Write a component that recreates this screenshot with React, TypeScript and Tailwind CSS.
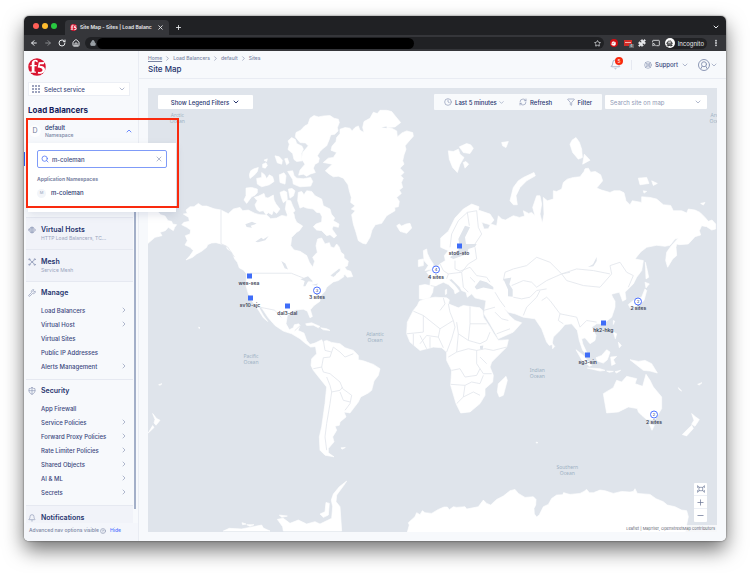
import React from 'react';
import {
  ArrowLeft,
  ArrowRight,
  Bell,
  Cast,
  ChevronDown,
  ChevronRight,
  ChevronUp,
  CircleHelp,
  Clock,
  Funnel,
  Hand,
  HatGlasses,
  House,
  LifeBuoy,
  Lock,
  Minus,
  MoreVertical,
  Plus,
  Puzzle,
  RefreshCw,
  RotateCw,
  Search,
  Star,
  Wrench,
  X,
} from 'lucide-react';

interface NavItem {
  label: string;
  expandable?: boolean;
}

interface Pin {
  label: string;
  x: number;
  y: number;
  count?: number;
}

const MAP_W = 1707;
const MAP_H = 1335;

const manageItems: NavItem[] = [
  { label: 'Load Balancers', expandable: true },
  { label: 'Virtual Host', expandable: true },
  { label: 'Virtual Sites' },
  { label: 'Public IP Addresses' },
  { label: 'Alerts Management', expandable: true },
];

const securityItems: NavItem[] = [
  { label: 'App Firewall' },
  { label: 'Service Policies', expandable: true },
  { label: 'Forward Proxy Policies', expandable: true },
  { label: 'Rate Limiter Policies', expandable: true },
  { label: 'Shared Objects', expandable: true },
  { label: 'AI & ML', expandable: true },
  { label: 'Secrets', expandable: true },
];

const pins: Pin[] = [
  { label: 'wes-sea', x: 303, y: 566 },
  { label: 'sv10-sjc', x: 306, y: 630 },
  { label: 'dal3-dal', x: 418, y: 654 },
  { label: '3 sites', x: 507, y: 608, count: 3 },
  { label: '4 sites', x: 864, y: 546, count: 4 },
  { label: 'sto6-sto', x: 933, y: 476 },
  { label: 'hk2-hkg', x: 1366, y: 707 },
  { label: 'sg3-sin', x: 1319, y: 804 },
  { label: '2 sites', x: 1471, y: 641, count: 2 },
  { label: '2 sites', x: 1518, y: 983, count: 2 },
];

const oceans = [
  { name: 'Arctic', x: 88, y: 90 },
  { name: 'Arctic', x: 1707, y: 90 },
  { name: 'Pacific', x: 309, y: 814 },
  { name: 'Atlantic', x: 681, y: 750 },
  { name: 'Indian', x: 1168, y: 856 },
  { name: 'Southern', x: 1258, y: 1150 },
];

const F5Logo = ({ className }: { className: string }) => (
  <svg viewBox="0 0 36 36" className={className} aria-label="F5">
    <circle cx="18" cy="18" r="17.5" fill="#d9132f" />
    <path d="M3 29.500h13v-2l-3-.7V16.500h4.500V14H13V9.500c0-3 1.600-3.700 3.600-1.800l1.800 1.300 1.600-3C16 1.500 7.500 3.500 7.500 10.500V14l-4 1v1.500h4v10.300L3 27.500z" fill="#fff" />
    <path d="M21.500 8.500 33 8l-1.500 4.500h-7.500l-.7 3.200c7 .3 10.700 2.800 10.700 7.300 0 6-6 9.800-14.500 8.200l.8-3.700c5 1 8.700-.2 8.700-3.500 0-3.200-3.600-4.700-9.500-5z" fill="#fff" />
  </svg>
);

const LineIcon = ({ className = 'size-2', children }: { className?: string; children: React.ReactNode }) => (
  <svg viewBox="0 0 24 24" fill="none" stroke="currentColor" strokeWidth="2" strokeLinecap="round" strokeLinejoin="round" className={className}>
    {children}
  </svg>
);

const HostsIcon = () => (
  <LineIcon>
    <path d="M6 6a8 8 0 0 1 12 0M6 18a8 8 0 0 0 12 0M12 3v6M12 15v6M9 5v4M15 5v4M9 15v4M15 15v4" />
    <rect x="2" y="9.500" width="20" height="5" rx="1.500" />
  </LineIcon>
);

const MeshIcon = () => (
  <LineIcon>
    <circle cx="4" cy="4" r="2" />
    <circle cx="20" cy="4" r="2" />
    <circle cx="4" cy="20" r="2" />
    <circle cx="20" cy="20" r="2" />
    <circle cx="12" cy="12" r="2.500" />
    <path d="m6 6 4 4M18 6l-4 4M6 18l4-4M18 18l-4-4" />
  </LineIcon>
);

const ShieldIcon = () => (
  <LineIcon>
    <path d="M12 2c3 2 6 3 9 3v6c0 5-4 9-9 11-5-2-9-6-9-11V5c3 0 6-1 9-3zM12 2v20M3 11h18" />
  </LineIcon>
);

const GridIcon = () => (
  <svg viewBox="0 0 24 24" fill="currentColor" className="mr-[4px] size-2">
    <path d="M1 1h4v4H1zM10 1h4v4h-4zM19 1h4v4h-4zM1 10h4v4H1zM10 10h4v4h-4zM19 10h4v4h-4zM1 19h4v4H1zM10 19h4v4h-4zM19 19h4v4h-4z" />
  </svg>
);

const BrowserChrome = () => (
  <header className="shrink-0 bg-[#202124] text-[#e8eaed]">
    <div className="flex h-[19px] items-end">
      <div className="flex h-full w-[41px] items-center gap-[3px] pl-[9px]">
        <span className="size-[6px] rounded-full bg-[#ff5f57]" />
        <span className="size-[6px] rounded-full bg-[#febc2e]" />
        <span className="size-[6px] rounded-full bg-[#28c840]" />
      </div>
      <div className="flex h-[15px] w-[104px] items-center rounded-t bg-[#35363a] px-[5px]">
        <F5Logo className="size-[7px] shrink-0" />
        <span className="ml-[3px] flex-1 whitespace-nowrap text-[5px] font-semibold">
          Site Map - Sites | Load Balanc
        </span>
        <button aria-label="Close tab"><X className="size-[7px]" strokeWidth={3} /></button>
      </div>
      <button aria-label="New tab" className="mb-1 ml-[6px]"><Plus className="size-[7px]" strokeWidth={3} /></button>
      <button aria-label="Tab list" className="mb-1 mr-[6px] ml-auto"><ChevronDown className="size-2" strokeWidth={3} /></button>
    </div>
    <div className="flex h-4 items-center bg-[#35363a] pr-[6px] pl-[6px]">
      <button aria-label="Back"><ArrowLeft className="size-2" strokeWidth={3} /></button>
      <button aria-label="Forward" className="ml-[6px] text-[#85878a]"><ArrowRight className="size-2" strokeWidth={3} /></button>
      <button aria-label="Reload" className="ml-[6px]"><RotateCw className="size-2" strokeWidth={3} /></button>
      <button aria-label="Home" className="ml-[6px]"><House className="size-2" strokeWidth={3} /></button>
      <div className="ml-[5px] flex h-[12px] flex-1 items-center rounded-full bg-[#202124] pr-[3px] pl-[5px]">
        <Lock className="size-[6px] fill-current text-[#9aa0a6]" strokeWidth={3} />
        <div className="ml-[1px] h-[11px] w-[62%] rounded-full bg-black" />
        <button aria-label="Bookmark" className="ml-auto"><Star className="size-[7px]" strokeWidth={2.5} /></button>
      </div>
      <span className="ml-[6px] flex size-2 items-center justify-center rounded-full bg-[#d40d12]">
        <Hand className="size-[5px] fill-white text-white" />
      </span>
      <span className="relative ml-[6px] h-[6px] w-2 bg-[#d32d27]">
        <span className="absolute top-[2px] left-[1px] h-px w-[6px] bg-[#f3b3b0]" />
        <span className="absolute -right-[2px] -bottom-[2px] bg-[#5f6368] px-px text-[4px] leading-[4px]">4</span>
      </span>
      <Puzzle className="ml-[6px] size-2 fill-current" />
      <Cast className="ml-[6px] size-2" strokeWidth={2.5} />
      <span className="ml-[5px] flex h-[11px] items-center rounded-full bg-[#202124] pr-[3px]">
        <span className="flex size-[10px] items-center justify-center rounded-full bg-white text-[#202124]">
          <HatGlasses className="size-[7px]" strokeWidth={3} />
        </span>
        <span className="ml-[3px] text-[6px]">Incognito</span>
      </span>
      <button aria-label="More" className="ml-[5px]"><MoreVertical className="size-2" strokeWidth={3.5} /></button>
    </div>
  </header>
);

const NavGroup = ({
  icon,
  title,
  subtitle,
}: {
  icon: React.ReactNode;
  title: string;
  subtitle: string;
}) => (
  <a href="#" className="flex h-8 items-start border-t border-[#e6e9f1] bg-[#f1f3f9] pt-[7px] pl-[2px]">
    <span className="mt-px w-[13px] text-[#8c97b5]">{icon}</span>
    <span>
      <span className="block text-[7px] leading-[9px] font-semibold text-[#26346e]">{title}</span>
      <span className="block text-[5px] leading-[8px] text-[#9ba5be]">{subtitle}</span>
    </span>
  </a>
);

const NavSection = ({
  icon,
  title,
  items,
}: {
  icon: React.ReactNode;
  title: string;
  items: NavItem[];
}) => (
  <section className="border-t border-[#e6e9f1] pt-[6px] pb-[6px] pl-[2px]">
    <div className="mb-[5px] flex items-center">
      <span className="w-[13px] text-[#8c97b5]">{icon}</span>
      <h3 className="text-[7px] leading-[10px] font-semibold text-[#26346e]">{title}</h3>
    </div>
    <ul>
      {items.map((item) => (
        <li key={item.label}>
          <a href="#" className="flex h-[14px] items-center justify-between pr-[5px] pl-[13px] text-[6px] font-medium text-[#3a477c]">
            {item.label}
            {item.expandable && <ChevronRight className="size-2 text-[#8c97b5]" />}
          </a>
        </li>
      ))}
    </ul>
  </section>
);

const NamespacePicker = () => (
  <div className="relative z-20 mt-[3px] h-6">
    <button className="flex h-full w-full items-center pr-[5px] pl-[5px] text-left">
      <span className="flex size-3 items-center justify-center rounded-full bg-white/70 text-[7px] text-[#6d7897]">D</span>
      <span className="ml-[4px] flex-1">
        <span className="block text-[6px] leading-[9px] font-medium text-[#26346e]">default</span>
        <span className="block text-[5px] leading-[7px] font-medium text-[#7a84a3]">Namespace</span>
      </span>
      <ChevronUp className="size-2 text-[#4f73ff]" strokeWidth={2.5} />
    </button>
    <div className="absolute top-full left-[4px] h-[69px] w-[148px] bg-white px-[9px] pt-[7px] shadow-[0_3px_8px_rgba(40,60,110,0.12)]">
      <label className="flex h-[18px] items-center rounded-[2px] border border-[#7f9bf8] bg-white px-[3px]">
        <Search className="size-2 text-[#5a7cf5]" strokeWidth={2.5} />
        <input
          aria-label="Search namespaces"
          defaultValue="m-coleman"
          className="ml-[3px] w-0 flex-1 bg-transparent text-[6px] font-medium text-[#3a477c] outline-none"
        />
        <button aria-label="Clear"><X className="size-2 text-[#8c97b5]" /></button>
      </label>
      <p className="mt-[7px] text-[5px] leading-[8px] font-bold text-[#7a84a3]">Application Namespaces</p>
      <button className="mt-[5px] flex items-center text-[6px] leading-[10px] font-medium text-[#26346e]">
        <span className="mr-[5px] flex size-[9px] items-center justify-center rounded-full bg-[#f3f5f9] text-[4px] text-[#a9b2c8]">M</span>
        m-coleman
      </button>
    </div>
    <div className="pointer-events-none absolute -top-[1px] left-[2px] h-[90px] w-[153px] border-2 border-[#f92a0e]" />
  </div>
);

const Sidebar = () => (
  <aside className="relative flex w-[115px] shrink-0 flex-col border-r border-[#e9ecf3] bg-[#f7f9fc]">
    <span className="absolute top-[101px] left-0 h-[14px] w-px bg-[#2f5bea]" />
    <div className="px-1 pt-[7px]">
      <F5Logo className="size-[18px]" />
      <button className="mt-[6px] flex h-[14px] w-[102px] items-center border border-[#eceff5] bg-white px-[3px] text-[6px] font-medium text-[#3a477c]">
        <GridIcon />
        Select service
        <ChevronDown className="ml-auto size-2 text-[#8c97b5]" />
      </button>
      <h2 className="mt-2 text-[8px] leading-[12px] font-bold text-[#16225c]">Load Balancers</h2>
    </div>
    <NamespacePicker />
    <div className="relative min-h-0 flex-1 overflow-hidden pt-[74px]">
      <nav className="mr-[5px] ml-[2px]">
        <NavGroup icon={<HostsIcon />} title="Virtual Hosts" subtitle="HTTP Load Balancers, TC..." />
        <NavGroup icon={<MeshIcon />} title="Mesh" subtitle="Service Mesh" />
        <NavSection icon={<Wrench className="size-2" />} title="Manage" items={manageItems} />
        <NavSection icon={<ShieldIcon />} title="Security" items={securityItems} />
        <NavGroup icon={<Bell className="size-2" />} title="Notifications" subtitle="" />
      </nav>
      <span className="absolute top-0 right-[2px] bottom-[14px] w-[2px] bg-[#a3afc8]" />
    </div>
    <footer className="flex h-[18px] items-center bg-[#f4f6fb] pb-[3px] pl-[5px] text-[5px] font-medium text-[#7a84a3]">
      Advanced nav options visible
      <CircleHelp className="ml-[1px] size-[6px]" />
      <button className="ml-[4px] text-[#4f73ff]">Hide</button>
    </footer>
  </aside>
);

const PageHeader = () => (
  <div className="flex h-7 shrink-0 items-center border-b border-[#e9ecf3] pr-[8px] pl-[9px]">
    <div>
      <nav className="flex items-center gap-[2px] text-[5px] leading-[8px] font-medium text-[#7a84a3]">
        <a href="#" className="underline">Home</a>
        <ChevronRight className="size-[7px]" />
        <a href="#">Load Balancers</a>
        <ChevronRight className="size-[7px]" />
        <a href="#">default</a>
        <ChevronRight className="size-[7px]" />
        <a href="#">Sites</a>
      </nav>
      <h1 className="mt-px text-[8px] leading-[12px] font-medium text-[#26346e]">Site Map</h1>
    </div>
    <button aria-label="Alerts" className="relative ml-auto text-[#8c97b5]">
      <Bell className="size-[11px]" strokeWidth={1.5} />
      <span className="absolute -top-[2px] -right-[2px] flex size-2 items-center justify-center rounded-full bg-[#f92a0e] text-[5px] leading-none text-white">5</span>
    </button>
    <span className="ml-[10px] h-[10px] w-px bg-[#e6e9f1]" />
    <button className="ml-3 flex items-center text-[6px] font-medium text-[#3a477c]">
      <LifeBuoy className="mr-[3px] size-2 text-[#8c97b5]" />
      Support
      <ChevronDown className="ml-[3px] size-2 text-[#8c97b5]" />
    </button>
    <button aria-label="Account" className="ml-[9px] flex items-center text-[#8c97b5]">
      <LineIcon className="size-3">
        <circle cx="12" cy="12" r="11" />
        <circle cx="12" cy="10.500" r="5" />
        <path d="m8 15-2 4M16 15l2 4" />
      </LineIcon>
      <ChevronDown className="size-2" />
    </button>
  </div>
);

const WorldMap = () => (
  <svg viewBox={`0 0 ${MAP_W} ${MAP_H}`} preserveAspectRatio="none" className="absolute inset-0 h-full w-full">
    <g fill="#fff" stroke="#fff" strokeWidth="2" strokeLinejoin="round">
      {/* North America and Greenland */}
      <g transform="translate(-24 -21)">
        <path d="M24 386 50 390 62 402 75 406 84 420 95 422 98 430 110 432 104 440 100 450 85 440 76 450 60 455 66 465 45 470 24 488z" />
        <path d="M130 400 142 398 138 388 150 378 162 378 175 368 186 376 200 376 222 384 243 388 265 399 280 385 300 380 308 390 325 388 345 398 360 402 380 403 392 414 410 412 425 404 440 407 450 388 462 400 464 412 470 425 488 436 478 450 470 455 455 470 452 495 462 508 480 512 500 525 508 545 518 560 524 542 518 530 532 515 528 495 533 475 545 472 555 490 568 486 572 498 582 502 590 490 597 498 603 515 612 522 612 532 625 542 622 556 595 565 570 585 580 590 600 575 612 588 595 600 580 604 570 612 560 620 555 632 540 648 540 662 522 675 511 688 517 708 510 712 502 692 490 686 470 688 455 692 442 705 438 730 448 748 460 742 463 733 476 730 480 735 474 750 492 758 500 780 510 792 525 788 530 798 512 800 495 788 480 775 455 760 430 752 405 735 385 712 365 682 355 678 370 705 383 723 370 712 350 680 335 660 325 640 318 615 320 580 310 568 298 562 292 545 284 535 276 515 262 505 258 494 243 490 228 486 215 487 203 492 200 500 185 512 170 520 158 530 138 538 150 525 160 510 150 500 135 493 142 480 136 465 150 460 152 448 140 440 125 432 132 425 148 422 146 410z" />
        <path d="M588 582 600 572 602 562 612 556 620 568 632 572 638 588 622 590 615 582 605 588z" />
        <path d="M475 335 485 332 492 342 500 330 515 332 525 345 545 355 550 375 570 385 574 400 584 412 580 420 597 430 595 440 580 436 576 445 590 465 582 472 570 462 560 465 545 450 530 448 520 438 528 430 545 424 546 408 540 396 530 395 520 385 500 382 490 378 480 382 473 360z" />
        <path d="M345 372 352 360 343 350 356 346 372 338 376 350 384 352 400 343 402 358 408 370 420 385 410 398 400 390 396 402 385 396 378 402 370 390 358 392 350 386z" />
        <path d="M318 322 335 320 352 325 352 336 344 344 335 348 320 368 312 358 318 345zM328 282 332 270 342 264 355 260 352 272 344 282 330 293zM350 293 365 290 365 275 374 282 380 294 388 282 398 288 402 302 388 312 365 318 352 310z" />
        <path d="M372 238 382 234 380 242zM368 250 378 246 382 254 376 262 368 260zM405 225 418 228 427 238 425 250 412 246zM434 234 442 232 447 246 440 252zM418 282 432 276 438 285 435 310 420 305zM443 272 458 270 462 284 470 292 490 294 512 290 518 302 512 316 480 318 460 310 458 296zM420 335 432 330 440 334 442 356 430 366 424 350zM445 325 456 323 465 330 460 346 450 352zM440 358 452 360 458 375 465 390 455 400 450 390 442 402 436 385z" />
        <path d="M510 112 522 104 535 108 552 105 570 104 582 112 595 115 598 125 592 140 594 150 584 160 572 162 568 175 560 195 550 202 540 212 532 225 538 232 535 245 525 250 520 262 526 275 510 280 500 286 490 280 476 283 480 268 495 250 485 235 488 215 505 195 496 186 480 185 466 168 468 155 482 148 494 135 504 130z" />
        <path d="M455 170 466 176 470 188 486 196 490 205 484 218 486 240 470 242 462 236 458 218 444 206 448 190 444 180z" />
        <path d="M550 245 565 232 580 230 590 215 573 208 576 196 588 182 590 170 600 158 600 145 615 140 630 142 636 150 645 140 655 135 660 148 672 155 668 140 672 122 690 112 700 94 712 98 720 88 740 88 755 92 768 108 782 125 765 138 735 140 755 142 770 150 772 168 786 156 800 150 818 155 820 166 812 175 795 195 798 205 792 222 788 240 792 250 780 262 792 275 782 285 790 292 784 305 788 320 778 328 784 338 770 350 778 362 775 378 764 380 765 390 740 405 725 428 706 432 696 448 690 470 678 490 668 488 655 480 648 455 640 430 635 402 646 390 634 385 645 375 632 365 634 350 628 330 624 312 610 292 595 286 580 288 568 280 556 270 577 250z" />
      </g>
      {/* South America */}
      <g transform="translate(-24 549)">
        <path d="M525 218 545 208 548 214 560 210 575 216 600 220 615 232 640 240 655 255 655 268 672 272 700 282 720 295 715 315 702 332 695 360 685 368 662 380 655 395 640 415 630 428 612 425 618 440 600 455 598 465 585 468 590 480 578 500 582 515 565 535 565 548 582 560 555 555 540 540 538 500 545 470 555 400 560 350 540 325 520 300 513 285 515 265 530 250z" />
        <path d="M497 160 515 157 540 168 535 172 520 164 500 165zM542 172 560 175 570 180 550 178zM603 533 616 532 606 537zM176 170 180 172 177 174zM56 343 66 340 60 345z" />
        <path d="M38 430 50 445 60 450 48 465 42 458 45 448zM25 488 38 466 42 472z" />
        <path d="M250 783 268 775 305 777 340 770 365 765 370 774 390 783zM412 748 430 745 450 760 475 750 500 762 525 755 540 762 575 745 578 710 574 690 580 672 598 650 620 633 612 645 590 675 588 695 600 710 605 783 430 783 428 770z" />
        <path d="M540 732 555 725 558 697 568 700 565 735 550 742zM418 735 442 738 425 742zM306 758 318 762 308 764zM320 764 342 764 330 769z" />
      </g>
      {/* Europe and Asia */}
      <g transform="translate(696 39)">
        <path d="M182 440 182 412 205 392 225 352 250 325 275 310 297 318 295 328 330 340 342 358 330 372 305 365 312 385 325 384 332 370 350 375 355 345 365 355 376 358 400 345 418 350 434 346 430 330 446 338 455 335 465 345 458 320 470 285 480 285 485 310 480 340 487 368 492 340 490 290 502 300 520 295 520 270 530 272 545 265 550 245 562 235 580 230 600 228 612 212 615 204 625 202 632 214 646 212 662 222 668 240 650 262 665 268 690 275 702 270 720 270 732 276 738 300 750 312 757 300 785 305 785 288 810 290 830 295 850 312 872 314 880 330 905 330 920 337 925 325 945 328 960 335 975 350 985 362 996 358 1007 370 1007 385 995 388 980 378 965 375 958 390 962 403 945 408 925 430 898 432 890 430 888 440 890 465 878 475 863 500 857 480 860 455 874 435 895 412 885 415 870 434 855 437 830 434 800 440 782 454 765 475 790 480 785 510 770 530 760 550 735 575 738 596 728 602 718 575 705 578 692 582 690 572 698 590 705 602 705 620 695 650 670 670 650 670 635 680 648 705 645 720 630 730 615 712 605 715 608 730 615 745 624 765 608 750 598 720 592 690 575 670 555 672 540 690 520 710 516 732 508 735 500 725 485 685 465 655 430 650 405 640 385 635 370 620 388 645 405 660 425 667 400 695 355 715 350 705 330 670 312 640 318 600 285 592 275 580 262 590 258 575 245 570 240 560 215 535 206 537 225 555 238 572 225 580 222 568 205 552 190 545 175 552 160 560 158 575 150 590 130 596 118 595 118 555 135 552 150 555 152 530 140 515 165 505 180 490 196 480 193 465 205 450z" />
        <path d="M130 450 140 445 142 458 150 475 160 490 158 505 135 510 145 495 132 480zM115 478 130 475 130 495 115 498zM50 375 58 370 65 376 78 370 90 368 95 382 80 398 60 392z" />
        <path d="M205 150 220 152 235 145 240 160 252 170 240 190 232 215 218 200 208 175zM238 138 260 128 272 132 280 142 270 158 250 155zM250 185 258 182 266 190 255 202zM365 125 385 122 378 140 368 135z" />
        <path d="M390 300 400 260 415 240 430 230 462 215 466 225 440 240 420 260 408 285 412 312 400 312zM196 568 200 566 200 580 196 582z" />
        <path d="M570 130 576 118 588 110 598 124 605 145 607 170 595 175 578 155zM613 160 630 178 608 190zM775 232 800 230 807 248 780 252zM815 240 832 248 820 254zM790 270 800 272 792 277zM962 308 975 305 970 313z" />
        <path d="M745 612 760 600 785 590 795 565 800 570 792 600 772 615 750 622zM795 545 808 550 798 562zM796 485 802 510 806 530 798 535z" />
      </g>
      {/* Africa */}
      <g transform="translate(696 519)">
        <path d="M118 122 140 114 165 110 200 112 208 118 205 130 235 142 250 135 270 138 300 142 308 150 310 170 330 200 340 218 355 240 385 238 380 260 335 305 330 320 340 345 338 365 315 385 315 405 300 430 270 455 242 458 228 430 212 375 215 330 200 300 200 275 185 262 160 260 120 270 90 245 80 220 82 185 100 150 112 135z" />
        <path d="M355 370 378 348 382 360 370 405 358 410 352 395zM516 248 524 258 518 265z" />
      </g>
      {/* Oceania and East Antarctica */}
      <g transform="translate(1206 639)">
        <path d="M160 280 190 262 200 240 215 245 230 228 260 235 255 250 278 258 288 222 300 240 310 260 335 290 335 325 315 358 290 358 275 345 265 335 262 325 235 320 205 335 170 338 165 310zM298 372 313 375 306 390z" />
        <path d="M425 340 437 350 448 358 435 378 425 372 432 360zM425 375 430 385 410 407 397 403z" />
        <path d="M78 148 100 165 125 195 118 198 95 178zM112 203 150 205 165 210 150 212zM138 172 155 165 170 148 180 155 172 178 160 188 142 182zM182 170 200 168 190 178 196 190 185 195z" />
        <path d="M240 178 265 183 285 180 305 190 322 218 300 212 280 210 255 190zM190 95 200 100 196 115zM205 125 214 135 208 142zM190 60 194 62 190 72zM170 212 190 213 178 216zM195 214 212 210 200 218zM385 262 395 272 388 268zM443 252 456 247 448 254z" />
        <path d="M40 578 60 583 90 580 102 574 110 568 118 578 130 578 150 570 165 572 190 580 215 574 240 576 250 574 255 566 262 580 300 583 318 596 340 605 352 615 375 620 395 630 410 632 415 650 405 697H40z" />
      </g>
      {/* West Antarctica */}
      <g transform="translate(666 969)">
        <path d="M112 366 118 345 115 338 135 320 140 308 150 314 157 302 165 308 185 310 205 298 222 291 232 291 238 299 250 290 260 292 285 290 290 297 325 290 340 270 350 280 362 285 380 268 400 258 420 242 435 238 445 250 465 262 490 260 498 268 497 285 492 295 493 312 500 321 508 314 520 290 535 283 545 265 560 255 578 254 583 248 588 254 600 254V366z" />
        <path d="M270 0 305 0 275 7zM498 96 504 97 500 99z" />
      </g>
    </g>
    {/* Inland seas and lakes */}
    <g fill="#dfe4eb">
      <path d="M936 479 931 454 951 414 966 419 951 449 954 469 986 469 981 477 961 484 958 499 916 514 906 509 926 494z" />
      <path d="M980 598 996 578 1016 584 1036 598 1036 606 1006 600 986 606zM1066 574 1090 570 1084 590 1094 606 1094 628 1080 626 1080 606z" />
      <path d="M1320 538 1335 530 1346 508 1346 520 1336 536z" />
      <path d="M457 575 480 566 494 580 480 582 472 596 466 596 470 580zM490 592 510 588 506 594zM292 410 312 402 326 408 308 414 312 420 296 418zM322 462 340 450 346 455 362 445 352 458 330 464zM400 520 412 528 420 546 410 542zM700 118 716 116 716 121zM996 776 1006 774 1004 786 996 784z" />
    </g>
    {/* Country borders */}
    <g fill="none" stroke="#e2e6ec" strokeWidth="2.500" strokeLinejoin="round">
      <path d="M219 367V468l20 10 20 30M306 557H430l30 12 34 14M328 658 350 662 380 668 400 690M440 730 456 715" />
      <g transform="translate(-24 549)">
        <path d="M550 210 555 240 575 245 570 260 550 262 545 290 520 295M575 245 580 230 600 245 615 260 640 250M545 290 550 305 570 310 600 335 608 355 635 375 630 400 615 420M560 320 570 345 575 365 600 360 608 350M575 365 570 400 560 460 555 500 560 540M600 365 610 390 630 395" />
      </g>
      <g transform="translate(696 39)">
        <path d="M210 440 215 400 235 360 262 335 290 330M262 335 268 375M290 330 295 380 305 400 285 430M180 490 190 510 205 520 245 515 265 490 290 475 285 440M225 480 225 505 240 512 270 500 290 525 320 530 330 545M205 520 200 535M245 515 250 560 265 575M270 530 285 545M152 555 175 560M370 540 375 515 400 505 440 495 470 470 510 485 545 520 570 515M395 555 430 540 455 545 470 560 500 540 545 520M400 590 425 595 450 590 470 570 500 565M345 575 360 600 375 620M430 645 440 620 470 590 480 570" />
        <path d="M545 520 560 540 610 555 660 560 695 520 690 495 720 485 740 515 760 525 745 560M545 520 590 505 640 510 690 520M485 600 500 590 510 600 540 640 590 650 600 680M540 640 535 660 550 670M600 680 620 660 650 665" />
      </g>
      <g transform="translate(696 519)">
        <path d="M100 152 130 165 180 205 220 180 210 155 205 130M180 150 195 130 190 112M130 165 130 215 80 220M180 205 175 230 140 225 120 250M270 138 270 190 320 190M270 190 265 240 235 220 230 185M265 240 300 250 320 240 330 215M175 230 190 262M220 180 225 200 215 235 200 275M235 220 230 275 205 290M230 275 265 265 290 270 315 265 340 270 380 260M290 270 290 310 310 340 335 340M215 330 240 325 255 350 290 345 300 325M212 372 255 375 275 365 300 370 310 345M255 375 250 410 230 430M250 410 280 395 300 405M300 290 320 310M100 220 100 255M120 225 140 265M150 230 150 262M345 155 365 175 385 180M350 220 390 205M310 150 345 140" />
      </g>
    </g>
  </svg>
);

const SitePin = ({ pin }: { pin: Pin }) => (
  <button
    className="absolute flex h-[9px] w-8 -translate-x-1/2 -translate-y-1/2 items-center justify-center"
    style={{ left: `${(pin.x / MAP_W) * 100}%`, top: `${(pin.y / MAP_H) * 100}%` }}
  >
    {pin.count ? (
      <span className="flex size-2 items-center justify-center rounded-full border border-[#4f73ff] bg-white text-[4px] text-[#26346e]">
        {pin.count}
      </span>
    ) : (
      <span className="size-[5px] bg-[#3f6df8]" />
    )}
    <span className="absolute top-[8px] text-[5px] leading-[6px] font-semibold whitespace-nowrap text-[#3c4356]">{pin.label}</span>
  </button>
);

const SiteMap = () => (
  <div className="relative flex-1 overflow-hidden bg-[#dfe4eb]">
    <WorldMap />
    {oceans.map((ocean) => (
      <span
        key={`${ocean.name}-${ocean.x}`}
        className="absolute -translate-x-1/2 -translate-y-1/2 text-center font-['Noto_Sans',sans-serif] text-[5px] leading-[6px] text-[#9eb2c4]"
        style={{ left: `${(ocean.x / MAP_W) * 100}%`, top: `${(ocean.y / MAP_H) * 100}%` }}
      >
        {ocean.name}
        <br />
        Ocean
      </span>
    ))}
    {pins.map((pin) => (
      <SitePin key={`${pin.label}-${pin.x}`} pin={pin} />
    ))}

    <div className="absolute inset-x-[10px] top-[6px] flex items-center text-[6px] font-medium text-[#26346e]">
      <button className="flex h-[14px] w-[95px] items-center justify-center rounded-[1px] bg-white">
        Show Legend Filters
        <ChevronDown className="ml-[3px] size-2" strokeWidth={3} />
      </button>
      <div className="ml-auto flex h-4 w-[168px] items-center justify-between rounded-[1px] bg-[#f8fafc] px-[10px]">
        <button className="flex items-center">
          <Clock className="mr-[3px] size-2 text-[#8c97b5]" />
          Last 5 minutes
          <ChevronDown className="ml-px size-[7px] text-[#8c97b5]" />
        </button>
        <button className="flex items-center">
          <RefreshCw className="mr-[3px] size-2 text-[#8c97b5]" />
          Refresh
        </button>
        <button className="flex items-center">
          <Funnel className="mr-[3px] size-2 text-[#8c97b5]" />
          Filter
        </button>
      </div>
      <label className="ml-[3px] flex h-[14px] w-[102px] items-center rounded-[1px] bg-white px-[5px] font-normal">
        <input aria-label="Search site on map" placeholder="Search site on map" className="w-0 flex-1 outline-none placeholder:text-[#8f99b5]" />
        <ChevronDown className="size-2 text-[#8c97b5]" />
      </label>
    </div>

    <div className="absolute right-[10px] bottom-[10px] flex w-[13px] flex-col divide-y divide-[#eceff5] rounded-[1px] bg-white text-[#6d7897]">
      <button aria-label="Fit map" className="flex h-[13px] items-center justify-center">
        <LineIcon>
          <rect x="7" y="7" width="10" height="10" />
          <path d="M2 8V3M2 3l5 4M22 8V3M22 3l-5 4M2 16v5M2 21l5-4M22 16v5M22 21l-5-4" />
        </LineIcon>
      </button>
      <button aria-label="Zoom in" className="flex h-[13px] items-center justify-center"><Plus className="size-[9px]" /></button>
      <button aria-label="Zoom out" className="flex h-[13px] items-center justify-center"><Minus className="size-[9px]" /></button>
    </div>
    <p className="absolute right-0 bottom-0 bg-white/70 px-[2px] text-[4px] leading-[7px] text-[#5c6270]">
      <a href="#">Leaflet</a> | <a href="#">MapTiler</a>, <a href="#">OpenStreetMap contributors</a>
    </p>
  </div>
);

const App: React.FC = () => {
  return (
    <div className="flex h-screen bg-white px-6 pt-4 pb-8 font-['Inter',sans-serif]">
      <div className="flex min-w-0 flex-1 flex-col overflow-hidden rounded-[5px] shadow-[0_9px_20px_rgba(0,0,0,0.55),0_0_2px_rgba(0,0,0,0.6)]">
        <BrowserChrome />
        <div className="flex min-h-0 flex-1">
          <Sidebar />
          <main className="flex min-w-0 flex-1 flex-col bg-[#f7f9fc]">
            <PageHeader />
            <div className="flex flex-1 p-[9px]">
              <SiteMap />
            </div>
          </main>
        </div>
      </div>
    </div>
  );
};

export default App;
